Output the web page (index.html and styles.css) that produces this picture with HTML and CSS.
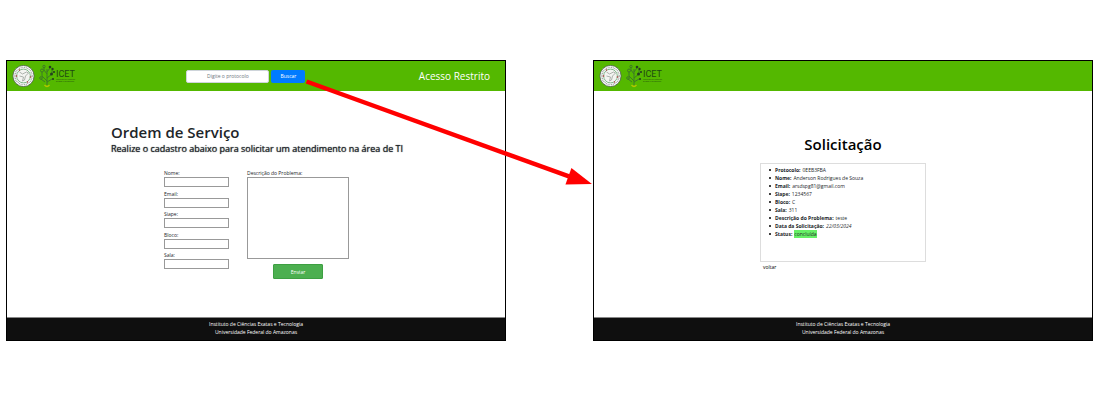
FILE: index.html
```html
<!DOCTYPE html>
<html lang="pt-BR">
<head>
<meta charset="utf-8">
<title>Ordem de Serviço</title>
<link rel="stylesheet" href="styles.css">
</head>
<body>
<svg width="0" height="0" class="defs" aria-hidden="true">
  <symbol id="seal" viewBox="0 0 22 22">
    <circle cx="11" cy="11" r="10.6" fill="#fff" stroke="#4c5a4c" stroke-width=".8"/>
    <circle cx="11" cy="11" r="8.6" fill="none" stroke="#a0a6a0" stroke-width="1.4" stroke-dasharray="1 .7"/>
    <circle cx="11" cy="11" r="6.9" fill="#f3f4f1" stroke="#4f9a5c" stroke-width=".7"/>
    <path d="M7 7l3 2 4-2 2 1-3 3-1 4-2 1 1-4-4-1" fill="none" stroke="#a5aaa5" stroke-width=".9"/>
    <g fill="#b8323c"><circle cx="4" cy="11" r=".8"/><circle cx="18" cy="12" r=".8"/><circle cx="7" cy="5" r=".7"/><circle cx="15" cy="17" r=".7"/></g>
  </symbol>
  <symbol id="tree" viewBox="0 0 17 24">
    <g fill="none" stroke="#3d7a26" stroke-width="1">
      <path d="M8 21V5M8 17L3 12V8M8 14l5-4V6M8 10L5 6V3M8 8l3-4M8 18l5-3h2M6 18l-4-3"/>
      <circle cx="3" cy="6.500" r="1.500"/><circle cx="2" cy="14" r="1.300"/><circle cx="5" cy="2.500" r="1.200"/>
    </g>
    <g fill="#24401f"><circle cx="11" cy="3" r="1.300"/><circle cx="13.500" cy="5" r="1.200"/><circle cx="12.500" cy="10" r="1.500"/><circle cx="15" cy="8" r="1.100"/><circle cx="14" cy="15" r="1"/></g>
    <path d="M5.500 21q2.500 3 5 0" fill="none" stroke="#b4c400" stroke-width="1.300"/>
  </symbol>
</svg>
<div class="stage">
  <section class="screen">
    <header class="bar">
      <div class="brand">
        <svg class="seal"><use href="#seal"/></svg>
        <svg class="tree"><use href="#tree"/></svg>
        <div class="wordmark"><span class="name">ICET</span><span class="tag">Instituto de Ciências</span><span class="tag">Exatas e Tecnologia</span></div>
      </div>
      <form class="search">
        <input class="query" type="text" placeholder="Digite o protocolo" aria-label="Protocolo">
        <button class="find" type="button">Buscar</button>
      </form>
      <a class="access" href="#">Acesso Restrito</a>
    </header>
    <main class="order">
      <h1 class="title">Ordem de Serviço</h1>
      <h2 class="subtitle">Realize o cadastro abaixo para solicitar um atendimento na área de TI</h2>
      <form class="request">
        <div class="fields">
          <div class="field"><label for="nome">Nome:</label><input id="nome" type="text"></div>
          <div class="field"><label for="email">Email:</label><input id="email" type="email"></div>
          <div class="field"><label for="siape">Siape:</label><input id="siape" type="text"></div>
          <div class="field"><label for="bloco">Bloco:</label><input id="bloco" type="text"></div>
          <div class="field"><label for="sala">Sala:</label><input id="sala" type="text"></div>
        </div>
        <div class="problem">
          <label for="descricao">Descrição do Problema:</label>
          <textarea id="descricao"></textarea>
          <button class="send" type="button">Enviar</button>
        </div>
      </form>
    </main>
    <footer class="foot"><p>Instituto de Ciências Exatas e Tecnologia</p><p>Universidade Federal do Amazonas</p></footer>
  </section>
  <section class="screen">
    <header class="bar">
      <div class="brand">
        <svg class="seal"><use href="#seal"/></svg>
        <svg class="tree"><use href="#tree"/></svg>
        <div class="wordmark"><span class="name">ICET</span><span class="tag">Instituto de Ciências</span><span class="tag">Exatas e Tecnologia</span></div>
      </div>
    </header>
    <main class="result">
      <h1 class="title">Solicitação</h1>
      <ul class="details">
        <li><b>Protocolo:</b> 0EEB3FBA</li>
        <li><b>Nome:</b> Anderson Rodrigues de Souza</li>
        <li><b>Email:</b> arsdspg81@gmail.com</li>
        <li><b>Siape:</b> 1234567</li>
        <li><b>Bloco:</b> C</li>
        <li><b>Sala:</b> 311</li>
        <li><b>Descrição do Problema:</b> teste</li>
        <li><b>Data da Solicitação:</b> <i>22/03/2024</i></li>
        <li><b>Status:</b> <span class="done">concluída</span></li>
      </ul>
      <a class="back" href="#">voltar</a>
    </main>
    <footer class="foot"><p>Instituto de Ciências Exatas e Tecnologia</p><p>Universidade Federal do Amazonas</p></footer>
  </section>
  <svg class="arrow" viewBox="0 0 290 110" aria-hidden="true">
    <path d="M6.500 11.500L269 106.500" stroke="#f00" stroke-width="4.500"/>
    <path d="M271.500 98L292 114L265.500 114.500z" fill="#f00"/>
  </svg>
</div>
</body>
</html>
```
FILE: styles.css
```css
* { box-sizing: border-box; }
body { margin: 0; background: #fff; color: #212529; font: 5px/8px "Open Sans", "Noto Sans", sans-serif; }
h1, h2, p, ul { margin: 0; padding: 0; }
a { color: inherit; text-decoration: none; }
input, textarea, button { font: inherit; color: inherit; margin: 0; padding: 0; }
.defs { position: absolute; }

.stage { position: relative; display: grid; grid-template-columns: 1fr 1fr; gap: 87px; padding: 60px 7px 59px 6px; }
.screen { display: flex; flex-direction: column; min-height: 281px; border: 1px solid #000; }
.arrow { position: absolute; left: 27.27%; top: 70px; width: 26.36%; overflow: visible; }

.bar { display: flex; align-items: center; justify-content: space-between; height: 30px; padding: 0 15px 0 5px; background: #54b800; }
.brand { display: flex; align-items: center; }
.seal { width: 23px; height: 22px; }
.tree { width: 17px; height: 24px; margin-left: 4px; }
.wordmark { display: flex; flex-direction: column; width: 17px; white-space: nowrap; color: #1f4a12; }
.name { font: 9px/9px Roboto, sans-serif; }
.tag { font-size: 2px; line-height: 2px; }
.search { display: flex; gap: 2px; }
.query { width: 83px; height: 13px; border: 1px solid #ced4da; border-radius: 2px; background: #fff; text-align: center; }
.query::placeholder { color: #6c757d; opacity: 1; }
.find { width: 34px; height: 13px; border: 0; border-radius: 2px; background: #007bff; color: #fff; }
.access { color: #fff; font-size: 10px; }

.title { font-size: 15px; line-height: 20px; font-weight: 600; }
.order { flex: 1; padding: 31px 0 0 104px; }
.subtitle { font-size: 9px; line-height: 14px; font-weight: 500; text-shadow: 0 0 1px #212529; }
.request { display: flex; gap: 18px; padding: 13px 0 0 53px; }
.fields { display: flex; flex-direction: column; justify-content: space-between; width: 65px; height: 100px; }
.field, .problem { display: flex; flex-direction: column; }
.field input { width: 100%; height: 10px; border: 1px solid #999; background: #fff; }
.problem { width: 102px; }
.problem textarea { height: 82px; border: 1px solid #999; background: #fff; resize: none; }
.send { align-self: center; width: 50px; height: 15px; margin-top: 5px; border: 1px solid #3d9f42; border-radius: 1px; background: #4caf50; color: #fff; }

.result { flex: 1; display: flex; flex-direction: column; align-items: center; padding-top: 43px; color: #000; }
.details { width: 166px; min-height: 99px; margin-top: 9px; padding: 2px 0 0 8px; border: 1px solid #ddd; color: #212529; list-style: none; }
.details li { display: flex; align-items: center; gap: 2px; }
.details li::before { content: ""; width: 2px; height: 2px; margin-right: 2px; border-radius: 1px; background: #000; }
.details b { font-weight: 700; }
.done { background: #66f066; }
.back { width: 160px; margin-top: 1px; }

.foot { padding: 2px 0 4px; border-top: 1px solid #888; background: #0f0f0f; color: #fff; text-align: center; }
```
